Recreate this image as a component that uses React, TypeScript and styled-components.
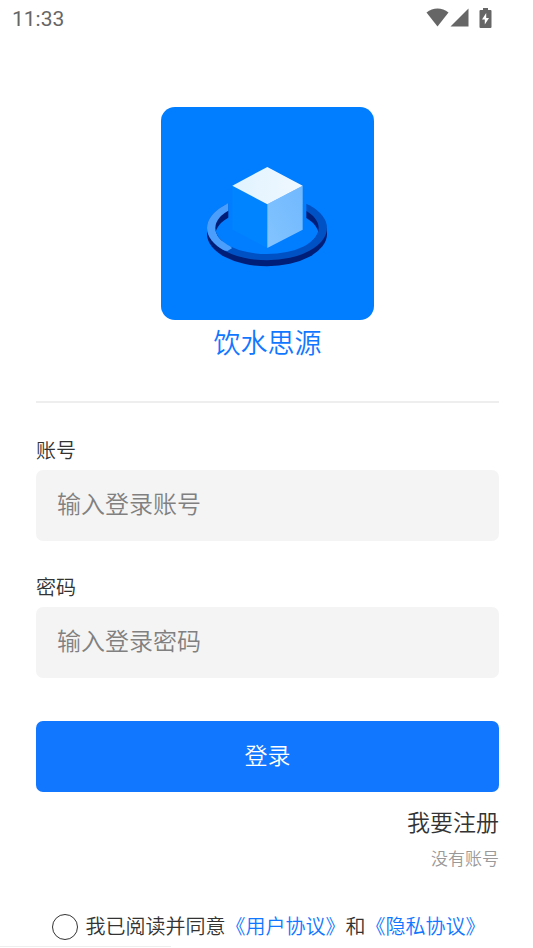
import React, { useState } from "react";
import styled, { createGlobalStyle } from "styled-components";

const GlobalStyle = createGlobalStyle`
  *, *::before, *::after { box-sizing: border-box; }
  body {
    margin: 0;
    background: #fff;
    color: #333;
    font-family: Roboto, "Noto Sans CJK SC", sans-serif;
  }
`;

const Page = styled.div`
  display: flex;
  flex-direction: column;
`;

const StatusBar = styled.header`
  display: flex;
  align-items: center;
  justify-content: space-between;
  height: 37px;
  padding: 0 41px 0 12px;
  color: #666;
  font-size: 21px;
  line-height: 36px;
`;

const StatusIcons = styled.div`
  display: flex;
  align-items: center;
  gap: 1px;
  padding-bottom: 2px;

  svg:last-child {
    margin-left: 9px;
  }
`;

const Content = styled.main`
  display: flex;
  flex-direction: column;
  padding: 70px 34px 5px 36px;
  font-weight: 350;
`;

const Brand = styled.section`
  display: flex;
  flex-direction: column;
  align-items: center;
  padding-bottom: 33px;
  border-bottom: 2px solid #eee;
`;

const Logo = styled.svg`
  display: block;
  width: 213px;
  height: 213px;
  border-radius: 14px;
  background: #007eff;
`;

const Title = styled.h1`
  margin: 0;
  color: #1177ff;
  font-size: 27px;
  font-weight: inherit;
  line-height: 48px;
`;

const Form = styled.form`
  display: flex;
  flex-direction: column;
  padding-top: 1px;
`;

const Field = styled.div`
  display: flex;
  flex-direction: column;
  gap: 4px;
  padding-top: 32px;
`;

const Label = styled.label`
  font-size: 20px;
  line-height: 30px;
`;

const TextInput = styled.input`
  width: 100%;
  height: 71px;
  padding: 0 21px 2px;
  border: 0;
  border-radius: 7px;
  background: #f4f4f4;
  color: #333;
  font: inherit;
  font-size: 24px;

  &::placeholder {
    color: #808080;
    opacity: 1;
  }
`;

const SubmitButton = styled.button`
  height: 71px;
  margin-top: 43px;
  padding: 0 0 5px;
  border: 0;
  border-radius: 7px;
  background: #1177ff;
  color: #fff;
  font: inherit;
  font-size: 23px;
  cursor: pointer;
`;

const Register = styled.div`
  display: flex;
  flex-direction: column;
  align-items: flex-end;
  gap: 7px;
  padding-top: 16px;
`;

const RegisterLink = styled.a`
  color: #333;
  font-size: 23px;
  line-height: 32px;
  text-decoration: none;
`;

const Hint = styled.span`
  color: #999;
  font-size: 17px;
  line-height: 24px;
`;

const Agreement = styled.div`
  display: flex;
  align-items: center;
  justify-content: center;
  gap: 8px;
  padding: 42px 0 0 2px;
  font-size: 20px;
  line-height: 28px;
  white-space: nowrap;
`;

const RoundCheck = styled.input`
  appearance: none;
  flex: none;
  width: 26px;
  height: 26px;
  margin: 0;
  border: 1px solid #333;
  border-radius: 50%;

  &:checked {
    border-color: #1177ff;
    background: #1177ff;
  }
`;

const PolicyLink = styled.a`
  color: #1177ff;
  text-decoration: none;
`;

const BottomEdge = styled.div`
  width: 32%;
  height: 1px;
  background: #eee;
`;

function CubeLogo() {
  return (
    <Logo viewBox="33 32 639 639" role="img" aria-label="饮水思源">
      <defs>
        <clipPath id="highlight">
          <path d="M150 280H235V440L246 456L232 464L216 462L150 500Z" />
        </clipPath>
        <clipPath id="ringHole">
          <ellipse cx="351" cy="395" rx="155" ry="78" />
        </clipPath>
        <linearGradient id="topFace" x1="0" y1="0" x2="1" y2="0">
          <stop offset="0" stopColor="#e0f3ff" />
          <stop offset="1" stopColor="#f0f8ff" />
        </linearGradient>
        <linearGradient id="rightFace" x1="1" y1="0" x2="0" y2="1">
          <stop offset="0" stopColor="#70b8fe" />
          <stop offset="1" stopColor="#83c4ff" />
        </linearGradient>
      </defs>
      <path d="M171 395V413A180 97 0 0 0 531 413V395Z" fill="#001d78" />
      <ellipse cx="351" cy="395" rx="180" ry="97" fill="#0052c4" />
      <ellipse
        cx="351"
        cy="395"
        rx="180"
        ry="97"
        fill="#4b9efb"
        clipPath="url(#highlight)"
      />
      <g clipPath="url(#ringHole)">
        <rect x="190" y="310" width="330" height="125" fill="#001d78" />
        <ellipse cx="351" cy="416" rx="155" ry="78" fill="#007eff" />
      </g>
      <path d="M235 280H469V410H235Z" fill="#007eff" />
      <path d="M247 268L352 324V455L247 400Z" fill="#0084ff" />
      <path d="M352 324L458 268V400L352 455Z" fill="url(#rightFace)" />
      <path d="M352 212L458 268L352 324L247 268Z" fill="url(#topFace)" />
    </Logo>
  );
}

function WifiIcon() {
  return (
    <svg width="23" height="19" viewBox="0 0 23 19" fill="currentColor" aria-hidden="true">
      <path d="M0.500 4.500C7 -0.800 16 -0.800 22.500 4.500L11.500 18.500Z" />
    </svg>
  );
}

function SignalIcon() {
  return (
    <svg width="19" height="19" viewBox="0 0 19 19" fill="currentColor" aria-hidden="true">
      <path d="M18.500 0.500V18.500H0.500Z" />
    </svg>
  );
}

function BatteryIcon() {
  return (
    <svg width="13" height="20" viewBox="0 0 13 20" fill="currentColor" aria-hidden="true">
      <path
        fillRule="evenodd"
        d="M4 0H9V2H11.500Q12.500 2 12.500 3V19Q12.500 20 11.500 20H1.500Q0.500 20 0.500 19V3Q0.500 2 1.500 2H4ZM7.200 5L3 11.500H5.800V16.500L10 10H7.200Z"
      />
    </svg>
  );
}

export default function App() {
  const [agreed, setAgreed] = useState(false);

  return (
    <Page>
      <GlobalStyle />
      <StatusBar>
        <time>11:33</time>
        <StatusIcons>
          <WifiIcon />
          <SignalIcon />
          <BatteryIcon />
        </StatusIcons>
      </StatusBar>
      <Content lang="zh-CN">
        <Brand>
          <CubeLogo />
          <Title>饮水思源</Title>
        </Brand>
        <Form onSubmit={(event) => event.preventDefault()}>
          <Field>
            <Label htmlFor="account">账号</Label>
            <TextInput id="account" type="text" placeholder="输入登录账号" />
          </Field>
          <Field>
            <Label htmlFor="password">密码</Label>
            <TextInput id="password" type="password" placeholder="输入登录密码" />
          </Field>
          <SubmitButton type="submit">登录</SubmitButton>
        </Form>
        <Register>
          <RegisterLink href="#register">我要注册</RegisterLink>
          <Hint>没有账号</Hint>
        </Register>
        <Agreement>
          <RoundCheck
            id="agree"
            type="checkbox"
            checked={agreed}
            onChange={(event) => setAgreed(event.target.checked)}
          />
          <span>
            <label htmlFor="agree">我已阅读并同意</label>
            <PolicyLink href="#terms">《用户协议》</PolicyLink>和
            <PolicyLink href="#privacy">《隐私协议》</PolicyLink>
          </span>
        </Agreement>
      </Content>
      <BottomEdge />
    </Page>
  );
}
